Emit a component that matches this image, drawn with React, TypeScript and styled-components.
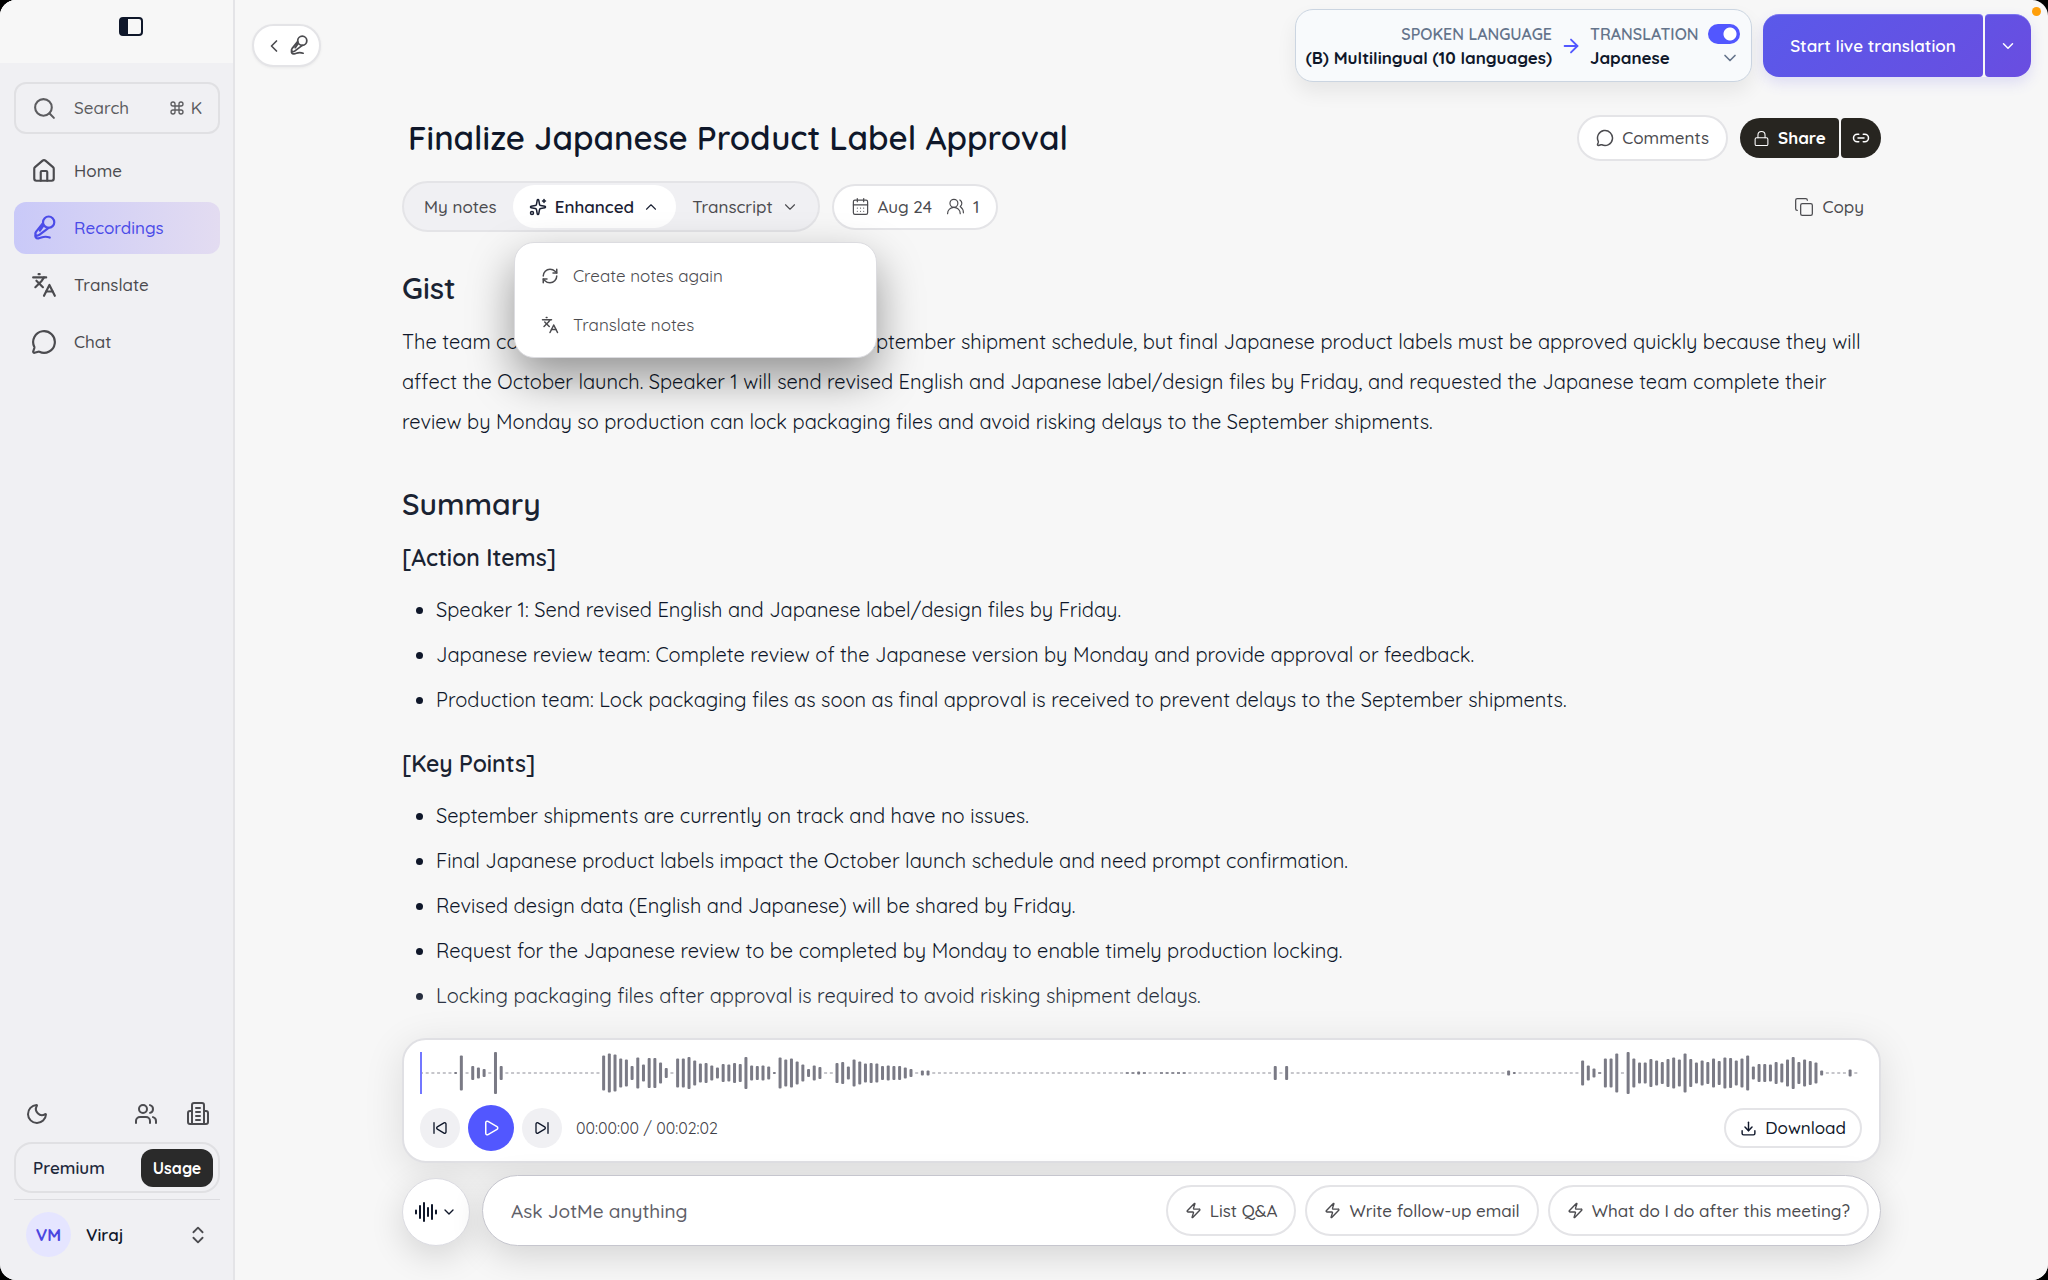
import React from "react";
import styled, { createGlobalStyle } from "styled-components";
import {
  Search, House, Languages, MessageCircle, Moon, Users, ChevronsUpDown, ChevronLeft, ChevronDown, ChevronUp,
  ArrowRight, Lock, Link2, Sparkles, CalendarDays, UsersRound, Copy, RefreshCw, Play, Download, Zap,
  SkipBack, SkipForward, Command,
} from "lucide-react";

const sans = `Quicksand, Lato, "Open Sans", sans-serif`;

const GlobalStyle = createGlobalStyle`
  *, *::before, *::after { box-sizing: border-box; }
  html, body { margin: 0; background: #000; }
  body { font-family: ${sans}; font-size: 17px; line-height: 24px; color: #0f172a; }
  h1, h2, h3, p, ul { margin: 0; padding: 0; }
  button, input { font: inherit; color: inherit; }
  button { cursor: pointer; }
  svg { flex: none; display: block; }
`;

const Shell = styled.div`
  display: flex;
  height: 100vh;
  overflow: hidden;
  border-radius: 16px;
  background: #f7f7f7;
`;

const Sidebar = styled.aside`
  flex: none;
  width: 235px;
  display: flex;
  flex-direction: column;
  background: #f0f0f3;
  border-right: 2px solid #e4e4e7;
`;

const SideTop = styled.div`
  height: 63px;
  padding: 14px 0 0 28px;
  display: flex;
  justify-content: center;
  align-items: flex-start;
  background: #f7f7f7;
`;

const PlainButton = styled.button<{ $dark?: boolean }>`
  display: flex;
  align-items: center;
  justify-content: center;
  padding: 0;
  border: 0;
  background: none;
  color: ${(p) => (p.$dark ? "#0f172a" : "#4b4b4f")};
`;

const SearchButton = styled.button`
  margin: 19px 13px 0 14px;
  height: 52px;
  padding: 0 16px;
  display: flex;
  align-items: center;
  gap: 17px;
  border: 2px solid #e0e0e3;
  border-radius: 12px;
  background: none;
  color: #5c5c5f;
  font-weight: 500;
`;

const Shortcut = styled.span`
  margin-left: auto;
  display: flex;
  align-items: center;
  gap: 6px;
`;

const Nav = styled.nav`
  padding: 11px 13px 0 14px;
  display: flex;
  flex-direction: column;
  gap: 5px;
`;

const NavLink = styled.a<{ $active?: boolean }>`
  height: 52px;
  padding-left: 17px;
  display: flex;
  align-items: center;
  gap: 17px;
  border-radius: 12px;
  text-decoration: none;
  font-weight: 500;
  color: ${(p) => (p.$active ? "#4b4be8" : "#4b4b4f")};
  background: ${(p) => (p.$active ? "linear-gradient(90deg, #c9c9f8, #e3dcf1)" : "none")};
`;

const SideBottom = styled.div`
  margin-top: auto;
  padding: 0 13px 23px 14px;
`;

const UtilityRow = styled.div`
  display: flex;
  align-items: center;
  gap: 28px;
  padding: 0 10px 16px 11px;
  & > :first-child { margin-right: auto; }
`;

const PlanBox = styled.div`
  height: 51px;
  padding: 0 5px 0 17px;
  display: flex;
  align-items: center;
  justify-content: space-between;
  border: 2px solid #e0e0e3;
  border-radius: 18px;
  color: #1e293b;
  font-weight: 600;
`;

const UsageButton = styled.button`
  width: 72px;
  height: 38px;
  padding: 0;
  border: 0;
  border-radius: 12px;
  background: #2a2a2a;
  color: #fff;
  font-size: 16px;
  font-weight: 700;
`;

const Profile = styled.button`
  width: 100%;
  margin-top: 6px;
  padding: 12px 11px 0 12px;
  display: flex;
  align-items: center;
  gap: 15px;
  border: 0;
  border-top: 1px solid #dcdce0;
  background: none;
  font-weight: 600;
  & > svg { margin-left: auto; color: #4b4b4f; }
`;

const Avatar = styled.span`
  width: 45px;
  height: 45px;
  display: grid;
  place-items: center;
  border-radius: 50%;
  background: #e5e5ff;
  color: #4a46e0;
  font-weight: 700;
`;

const Main = styled.main`
  position: relative;
  flex: 1;
  min-width: 0;
  display: flex;
  flex-direction: column;
`;

const TopBar = styled.header`
  display: flex;
  align-items: flex-start;
  padding: 9px 17px 0;
  height: 115px;
`;

const BackPill = styled.button`
  width: 69px;
  height: 43px;
  margin: 15px auto 0 0;
  padding: 0 10px;
  display: flex;
  align-items: center;
  justify-content: space-between;
  border: 2px solid #e4e4e7;
  border-radius: 22px;
  background: #fff;
  color: #4b4b4f;
  box-shadow: 0 1px 3px rgba(0, 0, 0, 0.06);
`;

const LanguagePanel = styled.div`
  height: 73px;
  padding: 0 11px 0 10px;
  display: flex;
  align-items: center;
  gap: 8px;
  border: 1px solid #cbd5e1;
  border-radius: 18px;
  background: #f8fafc;
  box-shadow: 0 10px 20px rgba(0, 0, 0, 0.07);
`;

const LanguageColumn = styled.div<{ $end?: boolean }>`
  min-width: 150px;
  display: flex;
  flex-direction: column;
  align-items: ${(p) => (p.$end ? "flex-end" : "stretch")};
  color: #64748b;
`;

const LanguageLine = styled.div`
  display: flex;
  align-items: center;
  justify-content: space-between;
  font-size: 16px;
  font-weight: 600;
  line-height: 24px;
  white-space: nowrap;
`;

const LanguageName = styled.strong`
  color: #0f172a;
  font-size: 17px;
  font-weight: 700;
`;

const Toggle = styled.input`
  appearance: none;
  width: 32px;
  height: 20px;
  margin: 0;
  border-radius: 10px;
  background: radial-gradient(circle at 22px 10px, #fff 6px, transparent 7px) #5257ff;
`;

const StartGroup = styled.div`
  display: flex;
  gap: 2px;
  margin: 5px 0 0 11px;
  border-radius: 16px;
  box-shadow: 0 6px 14px rgba(91, 84, 230, 0.16);
`;

const StartButton = styled.button<{ $caret?: boolean }>`
  width: ${(p) => (p.$caret ? "46px" : "220px")};
  height: 63px;
  padding: 0;
  display: grid;
  place-items: center;
  border: 0;
  border-top: 1px solid #7a74f0;
  border-radius: ${(p) => (p.$caret ? "4px 16px 16px 4px" : "16px 4px 4px 16px")};
  background: ${(p) => (p.$caret ? "linear-gradient(135deg, #6252e4, #6a4de0)" : "linear-gradient(135deg, #5a59ea, #674fe1)")};
  color: #fff;
  font-weight: 600;
`;

const RecordingDot = styled.span`
  position: absolute;
  top: 7px;
  right: 7px;
  width: 9px;
  height: 9px;
  border-radius: 50%;
  background: #ff9f0a;
`;

const Column = styled.div`
  width: calc(100% - 40px);
  max-width: 1479px;
  margin: 0 auto;
`;

const TitleRow = styled.div`
  display: flex;
  align-items: center;
  height: 46px;
  padding-left: 6px;
`;

const Title = styled.h1`
  margin-right: auto;
  font-size: 33px;
  line-height: 44px;
  font-weight: 600;
`;

const Pill = styled.button<{ $height: number; $strong?: boolean }>`
  height: ${(p) => p.$height}px;
  padding: 0 ${(p) => (p.$strong ? 14 : 17)}px;
  display: flex;
  align-items: center;
  gap: 8px;
  border: 2px solid #e4e4e7;
  border-radius: 26px;
  background: #fff;
  color: ${(p) => (p.$strong ? "#0f172a" : "#4b4b4f")};
  font-weight: 500;
  white-space: nowrap;
`;

const PillPart = styled.span`
  display: flex;
  align-items: center;
  gap: 8px;
  & + & { margin-left: 6px; }
`;

const ShareGroup = styled.div`
  display: flex;
  gap: 2px;
  margin-left: 12px;
`;

const ShareButton = styled.button<{ $link?: boolean }>`
  width: ${(p) => (p.$link ? "40px" : "99px")};
  height: 40px;
  padding: 0;
  display: flex;
  align-items: center;
  justify-content: center;
  gap: 8px;
  border: 0;
  border-radius: ${(p) => (p.$link ? "4px 20px 20px 4px" : "20px 4px 4px 20px")};
  background: #272520;
  color: #fff;
  font-weight: 700;
`;

const ToolRow = styled.div`
  position: relative;
  margin-top: 20px;
  display: flex;
  align-items: center;
  gap: 12px;
`;

const Tabs = styled.div`
  height: 51px;
  padding: 0 3px 0 4px;
  display: flex;
  align-items: center;
  border: 2px solid #e4e4e7;
  border-radius: 26px;
  background: #f0f0f3;
`;

const Tab = styled.button<{ $active?: boolean }>`
  height: 43px;
  padding: 0 16px;
  display: flex;
  align-items: center;
  gap: 8px;
  border: 0;
  border-radius: 22px;
  background: ${(p) => (p.$active ? "#fff" : "none")};
  color: ${(p) => (p.$active ? "#1a2033" : "#4b4b4f")};
  font-weight: ${(p) => (p.$active ? 600 : 500)};
`;

const CopyButton = styled(PlainButton)`
  margin-left: auto;
  padding-right: 17px;
  gap: 8px;
  font-weight: 500;
`;

const Menu = styled.div`
  position: absolute;
  z-index: 2;
  top: 61px;
  left: 112px;
  width: 363px;
  padding: 8px;
  border: 1px solid #dcdce0;
  border-radius: 20px;
  background: #fff;
  box-shadow: 0 20px 45px rgba(0, 0, 0, 0.4);
`;

const MenuItem = styled.button`
  width: 100%;
  height: 49px;
  padding: 0 18px;
  display: flex;
  align-items: center;
  gap: 14px;
  border: 0;
  background: none;
  color: #4b4b4f;
`;

const Heading = styled.h2`
  font-size: 30px;
  line-height: 40px;
  font-weight: 600;
  color: #1a2332;
`;

const SubHeading = styled.h3`
  font-size: 23px;
  line-height: 32px;
  font-weight: 600;
  color: #1a2332;
`;

const Article = styled.article`
  padding-top: 36px;
  font-size: 20px;
`;

const Paragraph = styled.p`
  margin: 14px 0 42px;
  line-height: 40px;
`;

const Section = styled.section`
  & + & { margin-top: 26px; }
  ${Heading} + & { margin-top: 18px; }
`;

const List = styled.ul`
  margin-top: 13px;
  padding-left: 34px;
  line-height: 45px;
`;

const Dock = styled.div`
  position: absolute;
  left: 0;
  right: 0;
  bottom: 0;
  padding-top: 60px;
  background: linear-gradient(rgba(247, 247, 247, 0), #f7f7f7 60%);
`;

const Player = styled.section`
  height: 125px;
  padding: 12px 17px 0 16px;
  border: 2px solid #e0e0e4;
  border-radius: 24px;
  background: #fff;
  box-shadow: 0 8px 40px rgba(0, 0, 0, 0.11);
`;

const Wave = styled.svg`
  width: 100%;
  height: 42px;
`;

const Controls = styled.div`
  display: flex;
  align-items: center;
  gap: 8px;
  margin-top: 11px;
`;

const RoundButton = styled.button<{ $main?: boolean }>`
  width: ${(p) => (p.$main ? 46 : 40)}px;
  height: ${(p) => (p.$main ? 46 : 40)}px;
  padding: 0;
  display: grid;
  place-items: center;
  border: 0;
  border-radius: 50%;
  background: ${(p) => (p.$main ? "#5257ff" : "#f0f0f3")};
  color: ${(p) => (p.$main ? "#fff" : "#0f172a")};
`;

const Time = styled.span`
  margin: 0 auto 0 6px;
  font-size: 16px;
  color: #3f3f48;
`;

const AskRow = styled.div`
  display: flex;
  align-items: flex-end;
  gap: 12px;
  padding: 12px 0 34px;
`;

const VoiceButton = styled.button`
  width: 68px;
  height: 68px;
  padding: 0;
  display: flex;
  align-items: center;
  justify-content: center;
  gap: 4px;
  border: 1px solid #dcdce2;
  border-radius: 50%;
  background: #fff;
  color: #0f172a;
  box-shadow: 0 10px 34px rgba(0, 0, 0, 0.14);
`;

const AskBox = styled.div`
  flex: 1;
  height: 71px;
  padding: 0 11px 0 28px;
  display: flex;
  align-items: center;
  gap: 9px;
  border: 1px solid #c6c6ce;
  border-radius: 36px;
  background: #fff;
  box-shadow: 0 10px 34px rgba(0, 0, 0, 0.14);
`;

const AskInput = styled.input`
  flex: 1;
  min-width: 0;
  padding: 0;
  border: 0;
  outline: 0;
  background: none;
  font-size: 19px;
  font-weight: 500;
  &::placeholder { color: #606068; opacity: 1; }
`;

const levels: Record<number, number[]> = {
  6: [2, 35],
  9: [14, 11, 8],
  13: [42, 14],
  32: [35, 39, 37, 29, 27, 14, 31, 17, 30, 30, 21, 10],
  45: [29, 29, 32, 25, 19, 20, 15, 11, 18, 17, 20, 18, 32, 15, 14, 15, 13, 2, 31, 27, 29, 23, 17, 8, 15, 12],
  73: [20, 22, 13, 27, 23, 19, 20, 19, 14, 15, 14, 14, 11, 8],
  88: [5, 5],
  124: [1, 1, 3, 1],
  130: [1, 1, 1, 1, 1],
  150: [14],
  152: [14],
  191: [5, 2],
  204: [25, 15, 9, 1, 29, 29, 39],
  212: [42, 29, 21, 21, 28, 25, 22, 28, 31, 27, 39, 28, 21, 25, 22, 29, 24, 31, 30, 25, 29, 35, 13, 18, 18, 17, 22, 19, 27, 32, 22, 27, 24, 21, 5],
  251: [7],
};

const columns: number[] = Array(253).fill(0);
Object.entries(levels).forEach(([start, run]) => run.forEach((h, i) => { columns[Number(start) + i] = h; }));

function Waveform() {
  const step = 1440 / 253;
  return (
    <Wave viewBox="0 0 1442 42" preserveAspectRatio="none" aria-hidden="true">
      {columns.map((h, i) =>
        h > 1
          ? <rect key={i} x={i * step} y={21 - h / 2} width="3" height={h} rx="1" fill="#7a7a85" />
          : <rect key={i} x={i * step} y={h ? 20 : 20.5} width="3" height={h ? 2 : 1} fill="#8e8e98" />
      )}
      <rect x="0" y="0" width="2" height="42" fill="#7377ff" />
    </Wave>
  );
}

function MicIcon({ size }: { size: number }) {
  return (
    <svg width={size} height={size} viewBox="0 0 24 24" fill="none" stroke="currentColor" strokeWidth="2" strokeLinecap="round" strokeLinejoin="round">
      <circle cx="16.3" cy="6.6" r="5.2" />
      <path d="M11 7.500 4.600 15.600C3.600 17 3.800 18.400 5 18.900M16.300 11.800 8 18.200c-.9.700-2 1-3 .7M11.600 9.600 8.200 14.500M4.300 17.500c-1 2.600.3 4.300 2.600 4.100 3.100-.3 4.600-3 10.400-.8" />
    </svg>
  );
}

function PanelIcon() {
  return (
    <svg width="26" height="26" viewBox="0 0 26 26" fill="none" stroke="currentColor" strokeWidth="2">
      <rect x="2" y="4" width="22" height="17" rx="3" />
      <path d="M3 5h6v15H3z" fill="currentColor" />
    </svg>
  );
}

function OfficeIcon() {
  return (
    <svg width="24" height="24" viewBox="0 0 24 24" fill="none" stroke="currentColor" strokeWidth="2" strokeLinecap="round" strokeLinejoin="round">
      <path d="M6 22V3a2 2 0 0 1 2-2h8a2 2 0 0 1 2 2v19zM6 9H4a2 2 0 0 0-2 2v9a2 2 0 0 0 2 2h2M18 9h2a2 2 0 0 1 2 2v9a2 2 0 0 1-2 2h-2M10 6h4M10 10h4M10 14h4M10 18h4" />
    </svg>
  );
}

function VoiceIcon() {
  return (
    <svg width="22" height="22" viewBox="0 0 22 22" fill="none" stroke="currentColor" strokeWidth="2" strokeLinecap="round">
      <path d="M1 9.500v3M5 5v12M9 2v18M13 7v8M17 4v14M21 9.500v3" />
    </svg>
  );
}

export default function App() {
  return (
    <>
      <GlobalStyle />
      <Shell>
        <Sidebar>
          <SideTop><PlainButton $dark aria-label="Toggle sidebar"><PanelIcon /></PlainButton></SideTop>
          <SearchButton><Search size={25} /> Search <Shortcut><Command size={16} /> K</Shortcut></SearchButton>
          <Nav>
            <NavLink href="#home"><House size={26} />Home</NavLink>
            <NavLink href="#recordings" $active><MicIcon size={26} />Recordings</NavLink>
            <NavLink href="#translate"><Languages size={26} />Translate</NavLink>
            <NavLink href="#chat"><MessageCircle size={26} />Chat</NavLink>
          </Nav>
          <SideBottom>
            <UtilityRow>
              <PlainButton aria-label="Dark mode"><Moon size={24} /></PlainButton>
              <PlainButton aria-label="Team"><Users size={24} /></PlainButton>
              <PlainButton aria-label="Company"><OfficeIcon /></PlainButton>
            </UtilityRow>
            <PlanBox>Premium <UsageButton>Usage</UsageButton></PlanBox>
            <Profile><Avatar>VM</Avatar>Viraj<ChevronsUpDown size={22} /></Profile>
          </SideBottom>
        </Sidebar>
        <Main>
          <TopBar>
            <BackPill aria-label="Back to recordings"><ChevronLeft size={20} /><MicIcon size={21} /></BackPill>
            <LanguagePanel>
              <LanguageColumn $end>
                <LanguageLine>SPOKEN LANGUAGE</LanguageLine>
                <LanguageLine><LanguageName>(B) Multilingual (10 languages)</LanguageName></LanguageLine>
              </LanguageColumn>
              <ArrowRight size={22} color="#5257ff" />
              <LanguageColumn>
                <LanguageLine as="label">TRANSLATION <Toggle type="checkbox" defaultChecked /></LanguageLine>
                <LanguageLine><LanguageName>Japanese</LanguageName><ChevronDown size={20} /></LanguageLine>
              </LanguageColumn>
            </LanguagePanel>
            <StartGroup>
              <StartButton>Start live translation</StartButton>
              <StartButton $caret aria-label="More options"><ChevronDown size={18} /></StartButton>
            </StartGroup>
            <RecordingDot />
          </TopBar>
          <Column>
            <TitleRow>
              <Title>Finalize Japanese Product Label Approval</Title>
              <Pill $height={46}><MessageCircle size={18} />Comments</Pill>
              <ShareGroup>
                <ShareButton><Lock size={17} strokeWidth={1.5} />Share</ShareButton>
                <ShareButton $link aria-label="Copy link"><Link2 size={18} /></ShareButton>
              </ShareGroup>
            </TitleRow>
            <ToolRow>
              <Tabs>
                <Tab>My notes</Tab>
                <Tab $active aria-expanded="true"><Sparkles size={18} />Enhanced<ChevronUp size={18} strokeWidth={1.5} /></Tab>
                <Tab>Transcript<ChevronDown size={18} strokeWidth={1.5} /></Tab>
              </Tabs>
              <Pill $height={46}>
                <PillPart><CalendarDays size={19} strokeWidth={1.5} />Aug 24</PillPart>
                <PillPart><UsersRound size={19} strokeWidth={1.5} />1</PillPart>
              </Pill>
              <CopyButton><Copy size={20} strokeWidth={1.5} />Copy</CopyButton>
              <Menu>
                <MenuItem><RefreshCw size={18} />Create notes again</MenuItem>
                <MenuItem><Languages size={18} />Translate notes</MenuItem>
              </Menu>
            </ToolRow>
            <Article>
              <Heading>Gist</Heading>
              <Paragraph>
                The team confirmed there are no issues with the September shipment schedule, but final Japanese product labels must be approved quickly because they will affect the October launch. Speaker 1 will send revised English and Japanese label/design files by Friday, and requested the Japanese team complete their review by Monday so production can lock packaging files and avoid risking delays to the September shipments.
              </Paragraph>
              <Heading>Summary</Heading>
              <Section>
                <SubHeading>[Action Items]</SubHeading>
                <List>
                  <li>Speaker 1: Send revised English and Japanese label/design files by Friday.</li>
                  <li>Japanese review team: Complete review of the Japanese version by Monday and provide approval or feedback.</li>
                  <li>Production team: Lock packaging files as soon as final approval is received to prevent delays to the September shipments.</li>
                </List>
              </Section>
              <Section>
                <SubHeading>[Key Points]</SubHeading>
                <List>
                  <li>September shipments are currently on track and have no issues.</li>
                  <li>Final Japanese product labels impact the October launch schedule and need prompt confirmation.</li>
                  <li>Revised design data (English and Japanese) will be shared by Friday.</li>
                  <li>Request for the Japanese review to be completed by Monday to enable timely production locking.</li>
                  <li>Locking packaging files after approval is required to avoid risking shipment delays.</li>
                </List>
              </Section>
            </Article>
          </Column>
          <Dock>
            <Column>
              <Player>
                <Waveform />
                <Controls>
                  <RoundButton aria-label="Previous"><SkipBack size={16} /></RoundButton>
                  <RoundButton $main aria-label="Play"><Play size={18} /></RoundButton>
                  <RoundButton aria-label="Next"><SkipForward size={16} /></RoundButton>
                  <Time>00:00:00 / 00:02:02</Time>
                  <Pill $height={40} $strong><Download size={17} />Download</Pill>
                </Controls>
              </Player>
              <AskRow>
                <VoiceButton aria-label="Voice options"><VoiceIcon /><ChevronDown size={16} /></VoiceButton>
                <AskBox>
                  <AskInput aria-label="Ask JotMe anything" placeholder="Ask JotMe anything" />
                  <Pill $height={51}><Zap size={17} />List Q&amp;A</Pill>
                  <Pill $height={51}><Zap size={17} />Write follow-up email</Pill>
                  <Pill $height={51}><Zap size={17} />What do I do after this meeting?</Pill>
                </AskBox>
              </AskRow>
            </Column>
          </Dock>
        </Main>
      </Shell>
    </>
  );
}
